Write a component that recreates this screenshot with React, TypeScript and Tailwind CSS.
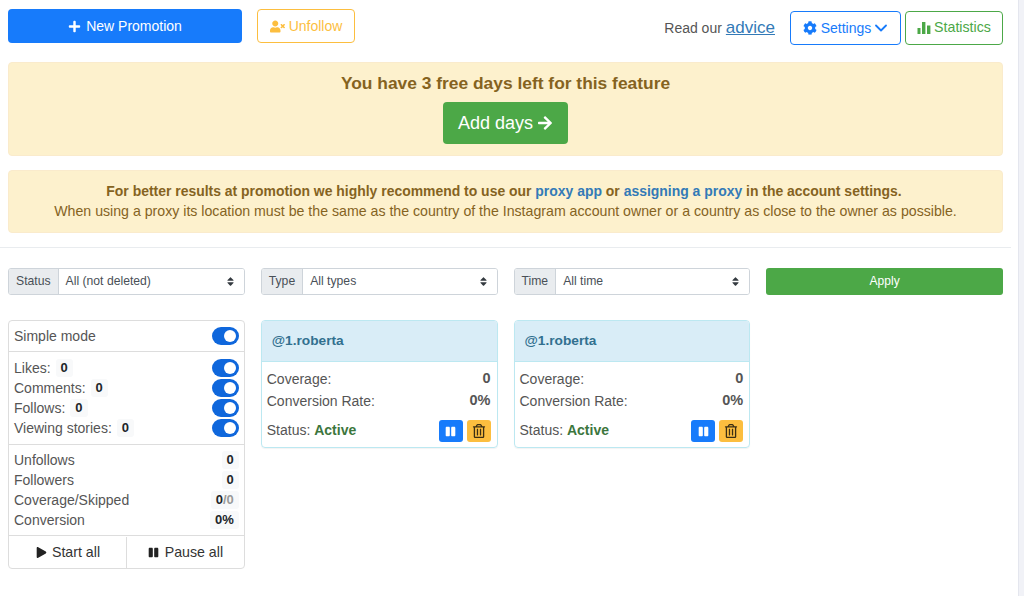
import React from 'react';
import { FaPlus, FaUserTimes, FaCog, FaArrowRight, FaPlay, FaPause, FaRegTrashAlt, FaSort } from 'react-icons/fa';

const BarsIcon = () => (
  <svg width="14" height="14" viewBox="0 0 14 14" fill="currentColor">
    <rect x="0.5" y="7" width="3" height="6" />
    <rect x="5" y="1" width="3.4" height="12" />
    <rect x="10" y="4.5" width="3.4" height="8.5" />
  </svg>
);

const ChevronIcon = () => (
  <svg width="12" height="8" viewBox="0 0 12 8" fill="none" stroke="currentColor" strokeWidth="1.8" strokeLinecap="round" strokeLinejoin="round">
    <polyline points="1,1.5 6,6.5 11,1.5" />
  </svg>
);

const Toggle = () => (
  <span className="flex h-[18px] w-[27px] items-center justify-end rounded-full bg-[#0f67dc] pr-[3px]">
    <span className="h-3 w-3 rounded-full bg-white" />
  </span>
);

const Count = ({ children }: { children: React.ReactNode }) => (
  <span className="rounded-[3px] bg-[#f8f9fa] px-[5px] py-px text-[13px] font-bold leading-[16px] text-[#212529]">{children}</span>
);

const FilterSelect = ({ label, value }: { label: string; value: string }) => (
  <div className="flex h-[27px] overflow-hidden rounded-[3px] border border-[#ced4da] text-[12.2px] text-[#495057]">
    <span className="flex items-center border-r border-[#ced4da] bg-[#e9ecef] px-[7px]">{label}</span>
    <span className="flex flex-1 items-center justify-between bg-white pl-[7px] pr-[8px]">
      {value}
      <FaSort className="text-[11px] text-[#343a40]" />
    </span>
  </div>
);

const PromoCard = () => (
  <div className="overflow-hidden rounded-[4px] border border-[#bce8f1] shadow-[0_1px_1px_rgba(0,0,0,0.05)]">
    <div className="flex h-[41px] items-center border-b border-[#bce8f1] bg-[#d9edf7] px-[10px] text-[13.7px] font-bold text-[#31708f]">
      @1.roberta
    </div>
    <div className="px-[5px] pb-[5px] pt-[6px] text-[14px] text-[#555]">
      <div className="flex h-[22px] items-center justify-between">
        <span>Coverage:</span>
        <b className="pr-px text-[14.5px]">0</b>
      </div>
      <div className="flex h-[22px] items-center justify-between">
        <span>Conversion Rate:</span>
        <b className="pr-px text-[14.5px]">0%</b>
      </div>
      <div className="mt-[7px] flex h-[23px] items-center justify-between">
        <span>
          Status: <b className="text-[#3c763d]">Active</b>
        </span>
        <div className="flex gap-[4px] self-end pr-px">
          <span className="flex h-[22px] w-[24px] items-center justify-center rounded-[3px] bg-[#177bfb] text-[11px] text-white">
            <FaPause />
          </span>
          <span className="flex h-[22px] w-[24px] items-center justify-center rounded-[3px] bg-[#fcbe3f] text-[14px] text-[#3b2f14]">
            <FaRegTrashAlt />
          </span>
        </div>
      </div>
    </div>
  </div>
);

export default function App() {
  const actionRows = ['Likes:', 'Comments:', 'Follows:', 'Viewing stories:'];
  const totals: [string, React.ReactNode][] = [
    ['Unfollows', '0'],
    ['Followers', '0'],
    ['Coverage/Skipped', <>0<span className="text-[#999]">/0</span></>],
    ['Conversion', '0%'],
  ];

  return (
    <div className="flex h-[596px] w-[1024px] overflow-hidden bg-white font-['Liberation_Sans',Arial,sans-serif] text-[14px] text-[#555]">
      <div className="w-[1011px]">
        <div className="px-[8px]">
          <div className="flex h-[62px] items-start pt-[9px]">
            <div className="flex h-[34px] w-[234px] items-center justify-center gap-[5px] rounded-[4px] bg-[#177bfb] text-[14px] text-white">
              <FaPlus className="text-[13px]" /> New Promotion
            </div>
            <div className="ml-[15px] flex h-[34px] w-[98px] items-center justify-center gap-[4px] rounded-[4px] border border-[#fcbe3f] text-[14px] text-[#fcbe3f]">
              <FaUserTimes className="text-[15px]" /> Unfollow
            </div>
            <div className="ml-auto mt-px flex h-[34px] items-center self-start pt-[2px]">
              <span className="pt-px text-[14px] text-[#555]">Read our</span>
              <a className="ml-[4px] text-[17px] text-[#337ab7] underline">advice</a>
              <div className="ml-[15px] flex h-[34px] w-[111px] items-center justify-center gap-[4px] rounded-[4px] border border-[#177bfb] pr-px text-[14px] text-[#177bfb]">
                <FaCog className="text-[14px]" /> Settings <ChevronIcon />
              </div>
              <div className="ml-[4px] flex h-[34px] w-[98px] items-center justify-center gap-[3px] rounded-[4px] border border-[#4ca847] text-[14.2px] text-[#4ca847]">
                <BarsIcon /> Statistics
              </div>
            </div>
          </div>

          <div className="flex h-[94px] flex-col items-center rounded-[4px] border border-[#faebcc] bg-[#fdf1cd] pt-[8px] text-[#85631f]">
            <div className="text-[17.4px] font-bold leading-[24px]">You have 3 free days left for this feature</div>
            <div className="mt-[7px] flex h-[42px] w-[125px] items-center justify-center gap-[4px] rounded-[4px] bg-[#4ca847] text-[18px] text-white">
              Add days <FaArrowRight className="text-[16px]" />
            </div>
          </div>

          <div className="mt-[14px] flex h-[63px] flex-col items-center justify-center rounded-[4px] border border-[#faebcc] bg-[#fdf1cd] pb-[2px] text-[14px] leading-[20px] text-[#85631f]">
            <div className="pr-[3px] text-[13.95px] font-bold">
              For better results at promotion we highly recommend to use our <a className="text-[#337ab7]">proxy app</a> or{' '}
              <a className="text-[#337ab7]">assigning a proxy</a> in the account settings.
            </div>
            <div className="text-[14.16px]">When using a proxy its location must be the same as the country of the Instagram account owner or a country as close to the owner as possible.</div>
          </div>
        </div>

        <div className="mt-[14px] h-px bg-[#e9ecef]" />

        <div className="px-[8px]">
          <div className="mt-[20px] grid grid-cols-4 gap-x-4">
            <FilterSelect label="Status" value="All (not deleted)" />
            <FilterSelect label="Type" value="All types" />
            <FilterSelect label="Time" value="All time" />
            <div className="flex h-[27px] items-center justify-center rounded-[3px] bg-[#4ca847] pb-px text-[12px] text-white">Apply</div>
          </div>

          <div className="mt-[25px] grid grid-cols-4 items-start gap-x-4">
            <div className="overflow-hidden rounded-[4px] border border-[#ddd] text-[14px] text-[#555]">
              <div className="flex h-[31px] items-center justify-between border-b border-[#ddd] pl-[5px] pr-[5px]">
                Simple mode <Toggle />
              </div>
              <div className="border-b border-[#ddd] px-[5px] pb-[6px] pt-[6px]">
                {actionRows.map((name) => (
                  <div key={name} className="flex h-[20px] items-center justify-between">
                    <span className="flex items-center gap-[5px]">
                      {name} <Count>0</Count>
                    </span>
                    <Toggle />
                  </div>
                ))}
              </div>
              <div className="border-b border-[#ddd] px-[5px] pb-[5px] pt-[5px]">
                {totals.map(([name, value]) => (
                  <div key={name} className="flex h-[20px] items-center justify-between">
                    {name} <Count>{value}</Count>
                  </div>
                ))}
              </div>
              <div className="flex h-[32px] pt-px text-[#333]">
                <div className="flex w-[118px] items-center justify-center gap-[5px] border-r border-[#ddd] pl-px text-[14.2px]">
                  <FaPlay className="text-[11px] text-[#222]" /> Start all
                </div>
                <div className="flex flex-1 items-center justify-center gap-[6px] text-[14.2px]">
                  <FaPause className="text-[11px] text-[#222]" /> Pause all
                </div>
              </div>
            </div>
            <PromoCard />
            <PromoCard />
          </div>
        </div>
      </div>
      <div className="ml-[7px] flex-1 border-l border-[#e4e6ee] bg-[#f1f2f7]" />
    </div>
  );
}
